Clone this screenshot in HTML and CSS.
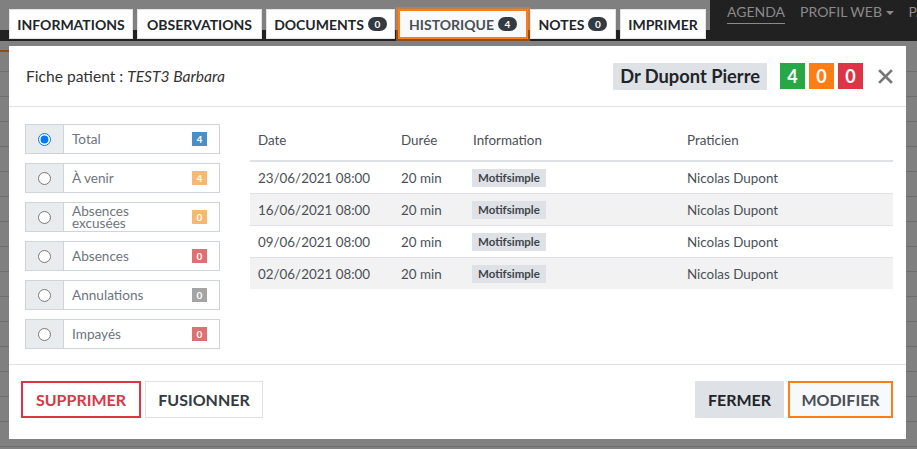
FILE: index.html
```html
<!DOCTYPE html>
<html lang="fr">
<head>
<meta charset="utf-8">
<title>Historique</title>
<link rel="stylesheet" href="styles.css">
</head>
<body>
<div class="page">
  <div class="topbar">
    <div class="tabs">
      <div class="tab w-info">INFORMATIONS</div>
      <div class="tab w-obs">OBSERVATIONS</div>
      <div class="tab w-doc">DOCUMENTS <span class="pill">0</span></div>
      <div class="tab w-hist active">HISTORIQUE <span class="pill">4</span></div>
      <div class="tab w-notes">NOTES <span class="pill">0</span></div>
      <div class="tab w-print">IMPRIMER</div>
    </div>
    <div class="nav">
      <span class="nav-link current">AGENDA</span>
      <span class="nav-link">PROFIL WEB <span class="caret"></span></span>
      <span class="nav-link">PA</span>
    </div>
  </div>
  <div class="backdrop-content">
    <div class="orange-line"></div>
  </div>

  <div class="modal">
    <div class="modal-header">
      <div class="title">Fiche patient : <em>TEST3 Barbara</em></div>
      <div class="header-right">
        <span class="doctor">Dr Dupont Pierre</span>
        <span class="count green">4</span>
        <span class="count orange">0</span>
        <span class="count red">0</span>
        <span class="close">
          <svg width="15" height="15" viewBox="0 0 15 15"><path d="M2 2L13 13M13 2L2 13" stroke="#777" stroke-width="2.6" stroke-linecap="square"/></svg>
        </span>
      </div>
    </div>
    <div class="modal-body">
      <div class="filters">
        <label class="filter"><span class="radio-cell"><input type="radio" name="f" checked></span><span class="filter-label"><span>Total</span></span><span class="mini blue">4</span></label>
        <label class="filter"><span class="radio-cell"><input type="radio" name="f"></span><span class="filter-label"><span>À venir</span></span><span class="mini orange-l">4</span></label>
        <label class="filter"><span class="radio-cell"><input type="radio" name="f"></span><span class="filter-label"><span class="two">Absences excusées</span></span><span class="mini orange-l">0</span></label>
        <label class="filter"><span class="radio-cell"><input type="radio" name="f"></span><span class="filter-label"><span>Absences</span></span><span class="mini red-l">0</span></label>
        <label class="filter"><span class="radio-cell"><input type="radio" name="f"></span><span class="filter-label"><span>Annulations</span></span><span class="mini gray-l">0</span></label>
        <label class="filter"><span class="radio-cell"><input type="radio" name="f"></span><span class="filter-label"><span>Impayés</span></span><span class="mini red-l">0</span></label>
      </div>
      <table class="history">
        <thead>
          <tr><th class="c-date">Date</th><th class="c-dur">Durée</th><th class="c-info">Information</th><th>Praticien</th></tr>
        </thead>
        <tbody>
          <tr><td>23/06/2021 08:00</td><td>20 min</td><td><span class="motif">Motifsimple</span></td><td>Nicolas Dupont</td></tr>
          <tr><td>16/06/2021 08:00</td><td>20 min</td><td><span class="motif">Motifsimple</span></td><td>Nicolas Dupont</td></tr>
          <tr><td>09/06/2021 08:00</td><td>20 min</td><td><span class="motif">Motifsimple</span></td><td>Nicolas Dupont</td></tr>
          <tr><td>02/06/2021 08:00</td><td>20 min</td><td><span class="motif">Motifsimple</span></td><td>Nicolas Dupont</td></tr>
        </tbody>
      </table>
    </div>
    <div class="modal-footer">
      <div class="group">
        <button class="btn btn-danger">SUPPRIMER</button>
        <button class="btn btn-light">FUSIONNER</button>
      </div>
      <div class="group">
        <button class="btn btn-grey">FERMER</button>
        <button class="btn btn-orange">MODIFIER</button>
      </div>
    </div>
  </div>
</div>
</body>
</html>
```
FILE: styles.css
```css
* { box-sizing: border-box; }
html, body { margin: 0; padding: 0; }
body {
  font-family: Lato, "Open Sans", sans-serif;
  color: #212529;
  background: #808080;
  width: 917px;
  height: 449px;
  overflow: hidden;
}
.page {
  position: relative;
  width: 917px;
  height: 449px;
  background: #808080;
}
.topbar {
  display: flex;
  height: 41px;
}
.tabs {
  width: 710px;
  flex-shrink: 0;
  display: flex;
  gap: 4px;
  padding: 9px 0 0 9px;
  background: linear-gradient(to bottom, #808080 0, #808080 30px, #212121 30px, #212121 41px);
}
.tab {
  height: 30px;
  background: #fff;
  border: 1px solid #e3e3e3;
  display: flex;
  align-items: center;
  justify-content: center;
  gap: 4px;
  font-weight: 700;
  font-size: 14px;
  color: #212529;
  white-space: nowrap;
}
.w-info { width: 124px; }
.w-obs { width: 125px; }
.w-doc { width: 129px; }
.w-hist { width: 130px; }
.w-notes { width: 86px; }
.w-print { width: 86px; }
.tab.active {
  background: #f8f9fa;
  border: 2px solid #fd7e14;
  box-shadow: 0 0 0 2px rgba(253, 126, 20, 0.5);
  color: #495057;
  margin: 0 -2px 0 -1px;
}
.pill {
  display: inline-flex;
  align-items: center;
  justify-content: center;
  min-width: 19px;
  height: 14px;
  padding: 0 5px;
  border-radius: 7px;
  background: #343a40;
  color: #fff;
  font-size: 10px;
  font-weight: 700;
}
.nav {
  flex: 1;
  min-width: 0;
  background: #212121;
  display: flex;
  gap: 15px;
  padding: 2px 0 0 17px;
  overflow: hidden;
}
.nav-link {
  flex-shrink: 0;
  color: #8a8a8a;
  font-size: 14px;
  line-height: 20px;
  height: 22px;
  white-space: nowrap;
}
.nav-link.current { border-bottom: 1px solid #8a8a8a; }
.caret {
  display: inline-block;
  width: 0; height: 0;
  border-left: 4px solid transparent;
  border-right: 4px solid transparent;
  border-top: 4px solid #8a8a8a;
  vertical-align: middle;
  margin-left: 0;
}
.backdrop-content {
  height: 408px;
  background-image: repeating-linear-gradient(to bottom, #808080 0px, #808080 24px, #6e6e6e 24px, #6e6e6e 25px);
  background-position: 0 -3px;
}
.orange-line {
  width: 10px;
  height: 2px;
  margin-top: 9px;
  background: #8a4d14;
}

.modal {
  position: absolute;
  left: 9px;
  top: 46px;
  width: 897px;
  height: 393px;
  background: #fff;
  display: flex;
  flex-direction: column;
}
.modal-header {
  height: 61px;
  border-bottom: 1px solid #dee2e6;
  display: flex;
  align-items: center;
  justify-content: space-between;
  padding: 0 13px 0 17px;
}
.title {
  font-size: 15.6px;
  color: #333;
}
.title em { font-style: italic; }
.header-right {
  display: flex;
  align-items: center;
}
.doctor {
  background: #dee2e6;
  font-weight: 700;
  font-size: 18.3px;
  height: 27px;
  line-height: 27px;
  padding: 0 7px;
  margin-right: 13px;
  color: #212529;
}
.count {
  width: 25px;
  height: 26px;
  display: inline-flex;
  align-items: center;
  justify-content: center;
  color: #fff;
  font-weight: 700;
  font-size: 18px;
  margin-right: 4px;
}
.count.green { background: #28a745; }
.count.orange { background: #fd7e14; }
.count.red { background: #dc3545; }
.close {
  margin-left: 11px;
  display: inline-flex;
  width: 15px;
  height: 15px;
}

.modal-body {
  flex: 1;
  display: flex;
  gap: 30px;
  padding: 17px 13px 0 16px;
  border-bottom: 1px solid #dee2e6;
}
.filters {
  width: 195px;
  display: flex;
  flex-direction: column;
  gap: 9px;
}
.filter {
  display: flex;
  height: 30px;
  border: 1px solid #ced4da;
  background: #fff;
}
.radio-cell {
  width: 38px;
  background: #e9ecef;
  border-right: 1px solid #ced4da;
  display: flex;
  align-items: center;
  justify-content: center;
}
.radio-cell input {
  margin: 0;
  width: 13px;
  height: 13px;
}
.filter-label {
  flex: 1;
  padding-left: 8px;
  display: flex;
  align-items: center;
  font-size: 13.6px;
  color: #6c757d;
  line-height: 12px;
}
.filter-label .two { width: 80px; line-height: 12px; }
.mini {
  align-self: center;
  width: 15px;
  height: 14px;
  margin-right: 12px;
  display: inline-flex;
  align-items: center;
  justify-content: center;
  font-size: 10px;
  font-weight: 700;
  color: #fff;
}
.mini.blue { background: #4b8fc8; }
.mini.orange-l { background: #f8b870; }
.mini.red-l { background: #dd7070; }
.mini.gray-l { background: #a4a4a4; }

.history {
  flex: 1;
  align-self: flex-start;
  border-collapse: collapse;
  font-size: 13.4px;
  color: #495057;
}
.history th {
  text-align: left;
  font-weight: 400;
  height: 37px;
  padding: 0 8px 4px;
  border-bottom: 2px solid #dee2e6;
  color: #495057;
}
.history td {
  height: 32px;
  padding: 1px 8px 0;
  border-top: 1px solid #dee2e6;
}
.history tbody tr:nth-child(even) { background: #f2f2f2; }
.c-date { width: 143px; }
.c-dur { width: 72px; }
.c-info { width: 214px; }
.motif {
  display: inline-block;
  background: #dee2e6;
  font-size: 11.5px;
  font-weight: 700;
  color: #3f454b;
  padding: 2px 6px;
  line-height: 14px;
  margin-left: -1px;
}

.modal-footer {
  height: 74px;
  display: flex;
  align-items: flex-start;
  justify-content: space-between;
  padding: 16px 13px 0 12px;
}
.group { display: flex; gap: 4px; }
.btn {
  height: 37px;
  font-family: inherit;
  font-size: 16px;
  font-weight: 700;
  padding: 0;
  background: #fff;
  border: 1px solid #dee2e6;
  color: #343a40;
  cursor: pointer;
}
.btn-danger {
  border: 2px solid #dc3545;
  color: #dc3545;
  width: 120px;
}
.btn-light { width: 118px; }
.btn-grey {
  background: #dee2e6;
  border-color: #dee2e6;
  color: #212529;
  width: 89px;
}
.btn-orange {
  border: 2px solid #fd7e14;
  background: #f8f9fa;
  color: #495057;
  width: 105px;
}
```
